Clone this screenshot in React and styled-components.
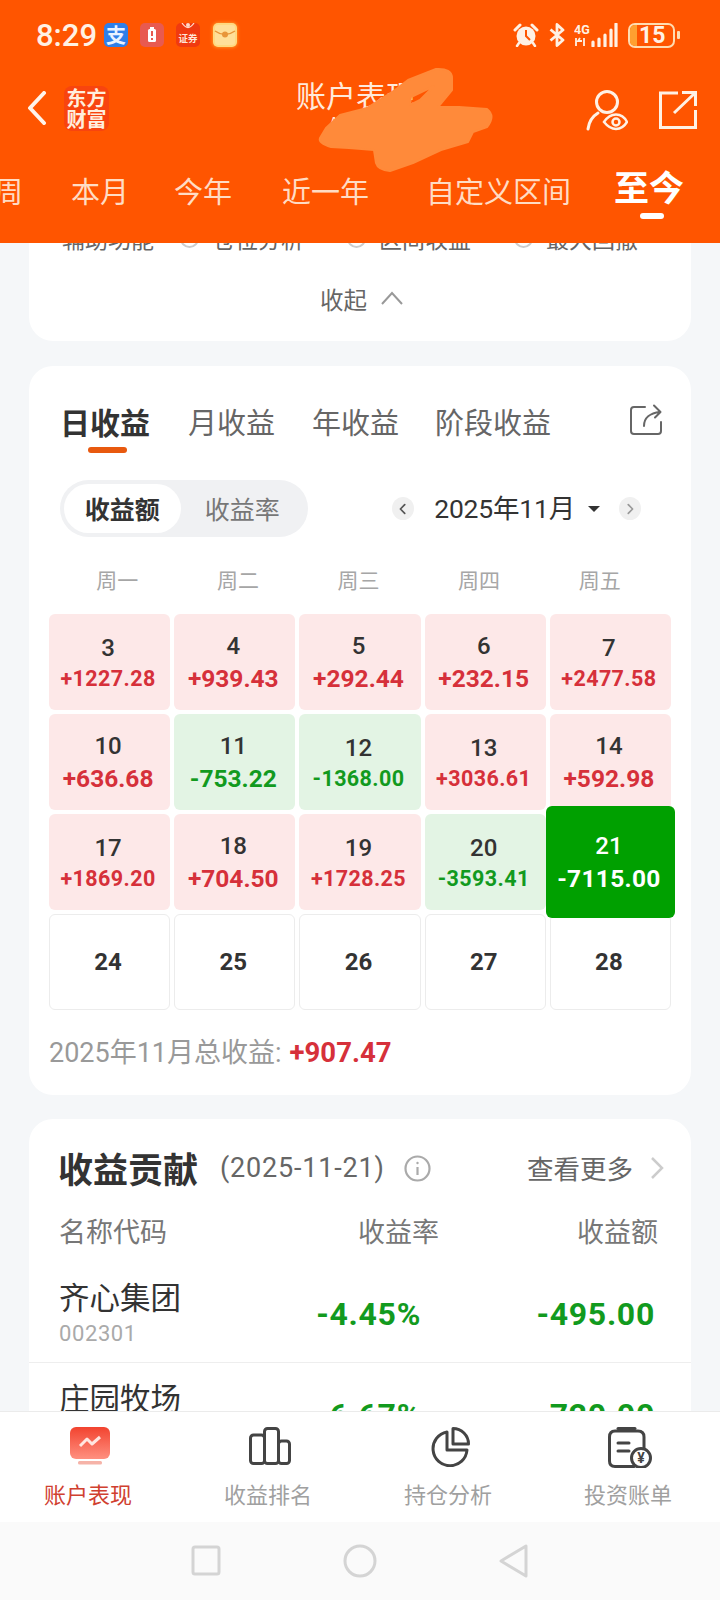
import React from 'react';
import styled, { createGlobalStyle } from 'styled-components';

const CJK = `"Noto Sans CJK SC", sans-serif`;
const NUM = `Roboto, "Noto Sans CJK SC", sans-serif`;

const GlobalStyle = createGlobalStyle`
  html, body { margin: 0; padding: 0; }
  body { font-family: ${CJK}; background: #f5f7f9; overflow: hidden; }
  * { box-sizing: border-box; }
`;

const Page = styled.div`
  width: 720px;
  height: 1600px;
  display: flex;
  flex-direction: column;
  overflow: hidden;
  background: #f5f7f9;
`;

/* ---------- header ---------- */
const Header = styled.header`
  position: relative;
  flex: none;
  height: 243px;
  background: #ff5500;
  color: #fff;
  overflow: hidden;
  z-index: 2;
`;
const StatusBar = styled.div`
  height: 70px;
  padding: 0 40px 0 36px;
  display: flex;
  align-items: center;
  justify-content: space-between;
`;
const StatusGroup = styled.div`
  display: flex;
  align-items: center;
`;
const Time = styled.span`
  font: 500 31px/1 ${NUM};
  color: #fff1e4;
  width: 68px;
`;
const AppBadge = styled.span`
  display: block;
  width: 24px;
  height: 24px;
  margin-right: ${p => p.$mr || 12}px;
  border-radius: 5px;
  background: ${p => p.$bg};
  box-shadow: ${p => p.$glow ? `0 0 3px 1px ${p.$glow}` : 'none'};
  color: #e9f2ff;
  font: 700 20px/24px ${CJK};
  text-align: center;
  overflow: hidden;
`;
const BatteryBox = styled.div`
  position: relative;
  width: 47px;
  height: 25px;
  margin-left: 10px;
  border: 2px solid #ffdcb0;
  border-radius: 7px;
  overflow: hidden;
  font: 700 23px/21px ${NUM};
  color: #fff1e4;
  padding-left: 9px;
`;
const BatteryFill = styled.span`
  position: absolute;
  left: 0;
  top: 0;
  bottom: 0;
  width: 7px;
  background: #ffa030;
`;
const BatteryNub = styled.span`
  width: 3px;
  height: 8px;
  margin-left: 2px;
  background: #ffdcb0;
  border-radius: 1px;
`;

const NavBar = styled.div`
  height: 80px;
  padding: 0 23px 0 27px;
  display: grid;
  grid-template-columns: 1fr auto 1fr;
  align-items: center;
`;
const NavLeft = styled.div`
  display: flex;
  align-items: center;
  gap: 17px;
  margin-top: -4px;
`;
const NavRight = styled.div`
  display: flex;
  align-items: center;
  justify-content: flex-end;
  gap: 31px;
`;
const Logo = styled.div`
  width: 45px;
  height: 45px;
  padding-top: 1px;
  border-radius: 8px;
  background: #f8440f;
  color: #ffeedd;
  font: 700 20px/21px "Noto Sans CJK SC", serif;
  text-align: center;
`;
const TitleBlock = styled.div`
  margin: -10px 12px 0 0;
  text-align: center;
`;
const Title = styled.div`
  font: 400 30px/36px ${CJK};
  color: #ffeadb;
`;
const SubTitle = styled.div`
  padding-left: 10px;
  font: 400 18px/22px ${CJK};
  color: #ffeadb;
`;
const Scribble = styled.svg`
  position: absolute;
  left: 0;
  top: 0;
  pointer-events: none;
`;

const RangeTabs = styled.div`
  display: flex;
  align-items: flex-start;
  margin: 20px 0 0 -6px;
  white-space: nowrap;
`;
const RangeTab = styled.div`
  margin-left: ${p => p.$gap}px;
  margin-top: ${p => (p.$active ? -4 : 0)}px;
  font: ${p => (p.$active ? '700 35px' : '400 29px')}/40px ${CJK};
  color: ${p => (p.$active ? '#fff' : '#ffdcc4')};
  display: flex;
  flex-direction: column;
  align-items: center;
`;
const RangeMark = styled.span`
  width: 24px;
  height: 6px;
  margin: 7px 0 0 6px;
  border-radius: 3px;
  background: #fff;
`;

/* ---------- scrolling content ---------- */
const Scroll = styled.main`
  flex: 1;
  min-height: 0;
  overflow: hidden;
  padding: 0 29px;
`;
const Card = styled.section`
  width: 662px;
  background: #fff;
  border-radius: 24px;
  margin-bottom: ${p => p.$mb ?? 24}px;
  ${p => p.$clip && 'margin-top: -23px; border-radius: 0 0 24px 24px;'}
`;

const OptionRow = styled.div`
  height: 36px;
  padding-left: 33px;
  display: flex;
  align-items: center;
  font: 400 23px/36px ${CJK};
  color: #666;
`;
const OptionName = styled.span`
  width: 118px;
`;
const Option = styled.span`
  display: flex;
  align-items: center;
  gap: 13px;
  width: 167px;
`;
const Radio = styled.i`
  width: 19px;
  height: 19px;
  border: 2px solid #ccc;
  border-radius: 50%;
`;
const Collapse = styled.div`
  height: 85px;
  padding: 25px 0 0 4px;
  display: flex;
  justify-content: center;
  gap: 13px;
  font: 400 23.5px/36px ${CJK};
  color: #666;
  svg { margin-top: 10px; }
`;

const TabRow = styled.div`
  display: flex;
  align-items: flex-start;
  padding: 33px 29px 0 31px;
`;
const EarnTab = styled.div`
  margin-right: ${p => p.$mr}px;
  font: ${p => (p.$active ? '700 30px' : '400 29px')}/44px ${CJK};
  color: ${p => (p.$active ? '#333' : '#666')};
  display: flex;
  flex-direction: column;
  align-items: center;
`;
const EarnMark = styled.span`
  width: 39px;
  height: 6px;
  margin: 4px 0 0 4px;
  border-radius: 3px;
  background: #e8590f;
`;
const ShareSlot = styled.div`
  margin-left: auto;
  padding-top: 5px;
`;

const ControlRow = styled.div`
  margin-top: 27px;
  padding: 0 50px 0 31px;
  height: 57px;
  display: flex;
  align-items: center;
  justify-content: space-between;
`;
const Segment = styled.div`
  width: 248px;
  height: 57px;
  padding: 4px;
  border-radius: 29px;
  background: #f0f1f3;
  display: flex;
`;
const SegmentItem = styled.div`
  width: ${p => (p.$active ? 117 : 124)}px;
  border-radius: 25px;
  background: ${p => (p.$active ? '#fff' : 'transparent')};
  font: ${p => (p.$active ? 700 : 400)} 25px/49px ${CJK};
  color: ${p => (p.$active ? '#333' : '#777')};
  text-align: center;
`;
const MonthPicker = styled.div`
  display: flex;
  align-items: center;
`;
const RoundBtn = styled.span`
  width: 22px;
  height: 23px;
  border-radius: 50%;
  background: #f0f0f0;
  display: flex;
  align-items: center;
  justify-content: center;
`;
const MonthText = styled.span`
  margin: 0 13px 0 20px;
  font: 400 26.5px/36px ${NUM};
  color: #333;
  letter-spacing: -0.2px;
`;
const Caret = styled.span`
  width: 0;
  height: 0;
  margin-right: 19px;
  border-left: 6px solid transparent;
  border-right: 6px solid transparent;
  border-top: 6px solid #333;
`;

const WeekRow = styled.div`
  margin: 27px 0 0 28px;
  width: 603px;
  display: grid;
  grid-template-columns: repeat(5, 1fr);
  font: 400 21px/30px ${CJK};
  color: #a6a6a6;
  text-align: center;
`;
const Calendar = styled.div`
  margin: 20px 0 0 20px;
  width: 622px;
  display: grid;
  grid-template-columns: repeat(5, 1fr);
  grid-auto-rows: 96px;
  gap: 4px;
`;
const palette = {
  up: { bg: '#fde8e8', fg: '#d6303a' },
  down: { bg: '#e3f4e4', fg: '#129a1e' },
  hot: { bg: '#00a000', fg: '#fff' },
  none: { bg: '#fff', fg: '#333' },
};
const Day = styled.div`
  position: relative;
  z-index: ${p => (p.$tone === 'hot' ? 1 : 0)};
  margin: ${p => (p.$tone === 'hot' ? '-8px -4px -8px -4px' : 0)};
  padding: ${p => (p.$tone === 'none' ? 0 : 2)}px 3px 0 0;
  border-radius: 6px;
  background: ${p => palette[p.$tone].bg};
  border: ${p => (p.$tone === 'none' ? '1px solid #ececec' : 'none')};
  color: ${p => palette[p.$tone].fg};
  display: flex;
  flex-direction: column;
  align-items: center;
  justify-content: center;
`;
const DayNum = styled.div`
  font: ${p => (p.$tone === 'none' ? 700 : 500)} 24px/32px ${NUM};
  color: ${p => (p.$tone === 'hot' ? '#fff' : '#333')};
`;
const DayValue = styled.div`
  font: 700 ${p => p.$size}px/1.35 ${NUM};
  letter-spacing: ${p => p.$spacing}px;
`;
const Total = styled.div`
  margin-top: 23px;
  padding: 0 0 22px 20px;
  font: 400 27px/40px ${NUM};
  color: #999;
  b {
    font: 700 27.5px/40px ${NUM};
    color: #d6303a;
    margin-left: 8px;
  }
`;

const ContribHead = styled.div`
  height: 74px;
  padding: 24px 27px 0 29px;
  display: flex;
  align-items: center;
`;
const ContribTitle = styled.h2`
  margin: 0 22px 0 0;
  font: 700 35px/50px ${CJK};
  color: #333;
`;
const DateNote = styled.span`
  font: 400 27px/50px ${NUM};
  letter-spacing: 0.8px;
  color: #666;
  margin-right: 19px;
`;
const More = styled.span`
  margin-left: auto;
  display: flex;
  align-items: center;
  gap: 17px;
  font: 400 26.5px/50px ${CJK};
  color: #666;
`;
const TableHead = styled.div`
  margin: 20px 0 13px;
  padding: 0 33px 0 30px;
  display: grid;
  grid-template-columns: 1fr 200px 219px;
  font: 400 27px/36px ${CJK};
  color: #777;
  span + span { text-align: right; }
`;
const StockRow = styled.div`
  padding: 16px 33px 14px 30px;
  height: 101px;
  display: grid;
  grid-template-columns: 1fr 200px 219px;
  align-items: center;
  border-bottom: 1px solid #eeeeee;
`;
const StockName = styled.div`
  font: 400 30.5px/36px ${CJK};
  color: #333;
`;
const StockCode = styled.div`
  margin-top: 5px;
  font: 400 22px/30px ${NUM};
  color: #aaa;
  letter-spacing: 0.6px;
`;
const GreenNum = styled.div`
  padding-right: ${p => p.$pr}px;
  text-align: right;
  font: 700 32px/40px ${NUM};
  letter-spacing: 0.7px;
  color: #129a1e;
`;

/* ---------- bottom ---------- */
const TabBar = styled.nav`
  flex: none;
  height: 111px;
  background: #fff;
  border-top: 1px solid #ebebeb;
  display: grid;
  grid-template-columns: repeat(4, 180px);
`;
const TabItem = styled.div`
  display: flex;
  flex-direction: column;
  align-items: center;
`;
const TabIcon = styled.div`
  height: 60px;
  padding-top: 15px;
  margin-bottom: 6px;
`;
const TabLabel = styled.span`
  margin-right: 4px;
  font: 400 22px/30px ${CJK};
  color: ${p => (p.$active ? '#d0402f' : '#a0a0a0')};
`;
const SysNav = styled.div`
  flex: none;
  height: 78px;
  background: #fafafa;
  padding: 22px 0 0 191px;
  display: flex;
  align-items: flex-start;
  gap: 122px;
`;

const weekDays = ['周一', '周二', '周三', '周四', '周五'];
const days = [
  ['3', '+1227.28', 'up'], ['4', '+939.43', 'up'], ['5', '+292.44', 'up'], ['6', '+232.15', 'up'], ['7', '+2477.58', 'up'],
  ['10', '+636.68', 'up'], ['11', '-753.22', 'down'], ['12', '-1368.00', 'down'], ['13', '+3036.61', 'up'], ['14', '+592.98', 'up'],
  ['17', '+1869.20', 'up'], ['18', '+704.50', 'up'], ['19', '+1728.25', 'up'], ['20', '-3593.41', 'down'], ['21', '-7115.00', 'hot'],
  ['24', null, 'none'], ['25', null, 'none'], ['26', null, 'none'], ['27', null, 'none'], ['28', null, 'none'],
];
const ranges = [['周', 0], ['本月', 48], ['今年', 45], ['近一年', 50], ['自定义区间', 57], ['至今', 43]];

function Chevron({ dir = 'left', size = 12, color = '#555', sw = 2 }) {
  const d = dir === 'left' ? 'M8 2 L3 7 L8 12' : 'M4 2 L9 7 L4 12';
  return (
    <svg width={size} height={size} viewBox="0 0 12 14" fill="none" stroke={color} strokeWidth={sw} strokeLinecap="round" strokeLinejoin="round">
      <path d={d} />
    </svg>
  );
}

function StatusIcons() {
  const c = '#fff1e4';
  return (
    <StatusGroup>
      <svg width="26" height="24" viewBox="0 0 26 24">
        <circle cx="13" cy="13" r="9.5" fill={c} />
        <path d="M13 7 V13 L17 17" stroke="#ff5500" strokeWidth="2" fill="none" />
        <path d="M2 7 L7 2 M24 7 L19 2" stroke={c} strokeWidth="3" strokeLinecap="round" />
        <path d="M6 20 L4 23 M20 20 L22 23" stroke={c} strokeWidth="2.5" strokeLinecap="round" />
      </svg>
      <svg width="16" height="24" viewBox="0 0 16 24" style={{ marginLeft: 10 }} fill="none" stroke={c} strokeWidth="2.8" strokeLinejoin="round">
        <path d="M1.5 6.5 L14 17 L8 22.5 V1.5 L14 7 L1.5 17.5" />
      </svg>
      <svg width="44" height="24" viewBox="0 0 44 24" style={{ marginLeft: 9 }}>
        <text x="0" y="10.5" fontFamily="Roboto, sans-serif" fontWeight="700" fontSize="12.5" fill={c}>4G</text>
        <path d="M2 15 V23 M6 15 l-2 3 h4 M10 23 V15" stroke={c} strokeWidth="1.8" fill="none" />
        <path d="M19 19 V23 M25 16 V23 M31 12 V23 M37 7 V23 M42 1 V23" stroke={c} strokeWidth="3.2" strokeLinecap="round" />
      </svg>
      <BatteryBox>
        <BatteryFill />
        15
      </BatteryBox>
      <BatteryNub />
    </StatusGroup>
  );
}

function PersonEye() {
  return (
    <svg width="42" height="42" viewBox="0 0 42 42" fill="none" stroke="#fff1e4" strokeWidth="3" strokeLinecap="round">
      <circle cx="21" cy="13" r="10.5" />
      <path d="M2 40 C3 32 7 27 12 24" />
      <path d="M18 33 C22 27 26 25.5 30 25.5 C34 25.5 38 27 41 33 C38 38 34 40 30 40 C26 40 22 38 18 33 Z" strokeWidth="2.5" fill="#ff5500" />
      <circle cx="30" cy="33" r="3.5" strokeWidth="2.5" />
    </svg>
  );
}

function ExportBox() {
  return (
    <svg width="38" height="38" viewBox="0 0 38 38" fill="none" stroke="#fff1e4" strokeWidth="3">
      <path d="M19 2 H1.5 V36.5 H36.5 V19" />
      <path d="M15 22 L36 2 M23 1.5 H36.5 V15" />
    </svg>
  );
}

function ShareIcon() {
  return (
    <svg width="32" height="31" viewBox="0 0 32 31" fill="none" stroke="#666" strokeWidth="2" strokeLinecap="round" strokeLinejoin="round">
      <path d="M15 3 H4 Q1 3 1 6 V27 Q1 30 4 30 H28 Q31 30 31 27 V18" />
      <path d="M14 22 C14 14 20 9 30 8 M24 1.5 L30.5 8 L25 13.5" />
    </svg>
  );
}

function AccountIcon() {
  return (
    <svg width="40" height="38" viewBox="0 0 40 38">
      <defs>
        <linearGradient id="acc" x1="0" y1="0" x2="0" y2="1">
          <stop offset="0" stopColor="#f2432f" />
          <stop offset="1" stopColor="#ff9080" />
        </linearGradient>
      </defs>
      <rect x="0" y="0" width="40" height="32" rx="6" fill="url(#acc)" />
      <rect x="8" y="34" width="24" height="3.5" rx="1.5" fill="#f6b3a8" />
      <path d="M10 19 L17 12 L22 17 L30 10" fill="none" stroke="#ffe6e0" strokeWidth="3" strokeLinejoin="round" />
    </svg>
  );
}

function BarsIcon() {
  return (
    <svg width="42" height="38" viewBox="0 0 42 38" fill="none" stroke="#444" strokeWidth="3" strokeLinejoin="round">
      <rect x="1.5" y="8" width="14" height="28.5" rx="3" />
      <rect x="15.5" y="1.5" width="14" height="35" rx="3" />
      <rect x="29.5" y="14" width="11" height="22.5" rx="3" />
    </svg>
  );
}

function PieIcon() {
  return (
    <svg width="40" height="40" viewBox="0 0 40 40" fill="none" stroke="#444" strokeWidth="3" strokeLinejoin="round">
      <path d="M17 5 A17 17 0 1 0 37 23 H17 Z" />
      <path d="M23 1.5 A15.5 15.5 0 0 1 38.5 17 H23 Z" />
    </svg>
  );
}

function BillIcon() {
  return (
    <svg width="44" height="41" viewBox="0 0 44 41" fill="none" stroke="#444" strokeWidth="3" strokeLinecap="round">
      <path d="M7 4 H30 Q36 4 36 10 V30 M26 39.5 H7 Q1.5 39.5 1.5 34 V10 Q1.5 4 7 4" />
      <path d="M10 1.5 H27" />
      <path d="M10 16 H21 M10 24 H21" />
      <circle cx="33" cy="31" r="9.5" fill="#fff" />
      <text x="33" y="36" textAnchor="middle" fontFamily="Roboto, sans-serif" fontWeight="700" fontSize="14" fill="#444" stroke="none">¥</text>
    </svg>
  );
}

export default function App() {
  return (
    <Page>
      <GlobalStyle />
      <Header>
        <StatusBar>
          <StatusGroup>
            <Time>8:29</Time>
            <AppBadge $bg="#2f7fe8">支</AppBadge>
            <AppBadge $bg="#e85a50">
              <svg width="24" height="24" viewBox="0 0 24 24">
                <rect x="8" y="6" width="8" height="13" rx="1.5" fill="#fff" />
                <rect x="10" y="4" width="4" height="2" fill="#fff" />
                <path d="M12 8 V13 M12 15 V17" stroke="#e85a50" strokeWidth="2" />
              </svg>
            </AppBadge>
            <AppBadge $bg="#f03a10" $mr={13}>
              <svg width="24" height="24" viewBox="0 0 24 24">
                <path d="M6 0 Q12 9 18 0" fill="none" stroke="#ffd9c8" strokeWidth="1.3" />
                <circle cx="12" cy="2" r="2" fill="#ffd9c8" />
                <text x="12" y="19" textAnchor="middle" fontFamily='"Noto Sans CJK SC", sans-serif' fontSize="9.5" fill="#ffe6d8">证券</text>
              </svg>
            </AppBadge>
            <AppBadge $bg="#ffd980" $glow="#ff8a20" $mr={0}>
              <svg width="24" height="24" viewBox="0 0 24 24">
                <rect x="2" y="2" width="20" height="20" rx="3" fill="#ffe09a" />
                <path d="M2 8 Q12 15 22 8" fill="none" stroke="#e8963a" strokeWidth="1.5" />
                <circle cx="12" cy="11.5" r="3" fill="#e8963a" />
              </svg>
            </AppBadge>
          </StatusGroup>
          <StatusIcons />
        </StatusBar>
        <NavBar>
          <NavLeft>
            <svg width="20" height="34" viewBox="0 0 20 34" fill="none" stroke="#fff4ea" strokeWidth="4" strokeLinecap="round" strokeLinejoin="round">
              <path d="M17 2 L3 17 L17 32" />
            </svg>
            <Logo>东方<br />财富</Logo>
          </NavLeft>
          <TitleBlock>
            <Title>账户表现</Title>
            <SubTitle>A股账户</SubTitle>
          </TitleBlock>
          <NavRight>
            <PersonEye />
            <ExportBox />
          </NavRight>
        </NavBar>
        <RangeTabs>
          {ranges.map(([label, gap]) => (
            <RangeTab key={label} $gap={gap} $active={label === '至今'}>
              {label}
              {label === '至今' && <RangeMark />}
            </RangeTab>
          ))}
        </RangeTabs>
        <Scribble width="720" height="243" viewBox="0 0 720 243">
          <path
            fillRule="evenodd"
            d="M408 80 L436 69 Q452 68 452 78 L452 90 L438 107 L459 107 L487 109 Q496 116 487 127 L473 132 L468 142 L441 150 L413 163 L390 171 Q378 170 376 163 L374 150 L349 148 L331 147 Q318 143 320 138 L326 128 L340 115 L367 108 L395 90 Z M411 97 L434 86 L420 100 L410 105 Z"
            fill="#ff8a3a"
            stroke="#ff8a3a"
            strokeWidth="2"
            strokeLinejoin="round"
          />
        </Scribble>
      </Header>

      <Scroll>
        <Card $clip $mb={25}>
          <OptionRow>
            <OptionName>辅助功能</OptionName>
            <Option><Radio />仓位分析</Option>
            <Option><Radio />区间收益</Option>
            <Option><Radio />最大回撤</Option>
          </OptionRow>
          <Collapse>
            收起
            <svg width="24" height="14" viewBox="0 0 24 14" fill="none" stroke="#999" strokeWidth="2">
              <path d="M2 13 L12 2 L22 13" />
            </svg>
          </Collapse>
        </Card>

        <Card>
          <TabRow>
            <EarnTab $active $mr={38}>日收益<EarnMark /></EarnTab>
            <EarnTab $mr={37}>月收益</EarnTab>
            <EarnTab $mr={36}>年收益</EarnTab>
            <EarnTab $mr={0}>阶段收益</EarnTab>
            <ShareSlot><ShareIcon /></ShareSlot>
          </TabRow>
          <ControlRow>
            <Segment>
              <SegmentItem $active>收益额</SegmentItem>
              <SegmentItem>收益率</SegmentItem>
            </Segment>
            <MonthPicker>
              <RoundBtn><Chevron dir="left" /></RoundBtn>
              <MonthText>2025年11月</MonthText>
              <Caret />
              <RoundBtn><Chevron dir="right" color="#999" /></RoundBtn>
            </MonthPicker>
          </ControlRow>
          <WeekRow>
            {weekDays.map(d => <span key={d}>{d}</span>)}
          </WeekRow>
          <Calendar>
            {days.map(([n, v, tone]) => {
              const long = v && v.length === 8;
              const size = tone === 'hot' ? 24.5 : long ? 21.5 : 24.5;
              const spacing = tone === 'hot' ? 0.3 : long ? 0.4 : 0;
              return (
                <Day key={n} $tone={tone}>
                  <DayNum $tone={tone}>{n}</DayNum>
                  {v && <DayValue $size={size} $spacing={spacing}>{v}</DayValue>}
                </Day>
              );
            })}
          </Calendar>
          <Total>2025年11月总收益:<b>+907.47</b></Total>
        </Card>

        <Card>
          <ContribHead>
            <ContribTitle>收益贡献</ContribTitle>
            <DateNote>(2025-11-21)</DateNote>
            <svg width="27" height="27" viewBox="0 0 27 27" fill="none" stroke="#aaa" strokeWidth="2.2">
              <circle cx="13.5" cy="13.5" r="12" />
              <path d="M13.5 12 V20" />
              <circle cx="13.5" cy="8" r="1.2" fill="#aaa" stroke="none" />
            </svg>
            <More>
              查看更多
              <svg width="14" height="22" viewBox="0 0 14 22" fill="none" stroke="#ccc" strokeWidth="2.5">
                <path d="M2 1 L12 11 L2 21" />
              </svg>
            </More>
          </ContribHead>
          <TableHead>
            <span>名称代码</span>
            <span>收益率</span>
            <span>收益额</span>
          </TableHead>
          <StockRow>
            <div>
              <StockName>齐心集团</StockName>
              <StockCode>002301</StockCode>
            </div>
            <GreenNum $pr={18}>-4.45%</GreenNum>
            <GreenNum $pr={3}>-495.00</GreenNum>
          </StockRow>
          <StockRow>
            <div>
              <StockName>庄园牧场</StockName>
              <StockCode>002910</StockCode>
            </div>
            <GreenNum $pr={18}>-6.67%</GreenNum>
            <GreenNum $pr={3}>-720.00</GreenNum>
          </StockRow>
        </Card>
      </Scroll>

      <TabBar>
        <TabItem><TabIcon><AccountIcon /></TabIcon><TabLabel $active>账户表现</TabLabel></TabItem>
        <TabItem><TabIcon><BarsIcon /></TabIcon><TabLabel>收益排名</TabLabel></TabItem>
        <TabItem><TabIcon><PieIcon /></TabIcon><TabLabel>持仓分析</TabLabel></TabItem>
        <TabItem><TabIcon><BillIcon /></TabIcon><TabLabel>投资账单</TabLabel></TabItem>
      </TabBar>
      <SysNav>
        <svg width="30" height="32" viewBox="0 0 30 32" fill="none" stroke="#d4d4d4" strokeWidth="3">
          <rect x="2" y="3" width="26" height="27" rx="2" />
        </svg>
        <svg width="34" height="34" viewBox="0 0 34 34" fill="none" stroke="#d4d4d4" strokeWidth="3">
          <circle cx="17" cy="17" r="15" />
        </svg>
        <svg width="30" height="34" viewBox="0 0 30 34" fill="none" stroke="#d4d4d4" strokeWidth="3" strokeLinejoin="round">
          <path d="M27 2 V32 L2 17 Z" />
        </svg>
      </SysNav>
    </Page>
  );
}
